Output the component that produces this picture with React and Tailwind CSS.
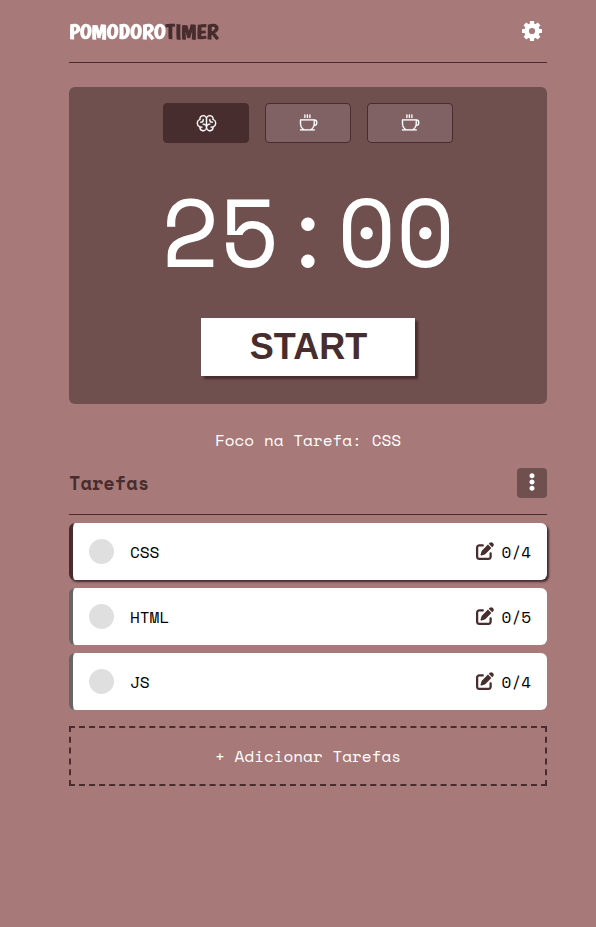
import { PiBrain, PiCoffee } from "react-icons/pi";
import { FaEllipsisV } from "react-icons/fa";
import { FaPenToSquare } from "react-icons/fa6";

const tasks = [
  { name: "CSS", count: "0/4", active: true },
  { name: "HTML", count: "0/5", active: false },
  { name: "JS", count: "0/4", active: false },
];

const teeth = [0, 45, 90, 135];

function Gear() {
  return (
    <svg viewBox="0 0 20 20" className="mr-[5px] size-5" fill="white">
      <mask id="gear-hole">
        <rect width="20" height="20" />
        <circle cx="10" cy="10" r="3.1" fill="black" />
      </mask>
      <g mask="url(#gear-hole)">
        <circle cx="10" cy="10" r="7.7" />
        {teeth.map((a) => (
          <rect key={a} x="7.9" y="0" width="4.2" height="20" rx="0.6" transform={`rotate(${a} 10 10)`} />
        ))}
      </g>
    </svg>
  );
}

function Mode({ icon: Icon, active }) {
  return (
    <button
      className={`flex h-10 w-[86px] items-center justify-center rounded border border-[#472d2d] text-white ${
        active ? "bg-[#472d2d] text-[21px]" : "bg-[#806164] text-xl"
      }`}
    >
      <Icon stroke="currentColor" strokeWidth="2" />
    </button>
  );
}

function Task({ name, count, active }) {
  return (
    <li
      className={`flex h-[57px] items-center rounded-md border-l-4 bg-white px-4 text-black ${
        active ? "border-[#472d2d] shadow-[2px_2px_2px_#472d2d]" : "border-[#666666]"
      }`}
    >
      <span className="size-[25px] rounded-full bg-[#dfdfdf]" />
      <span className="ml-4 flex-1">{name}</span>
      <FaPenToSquare className="mr-2 mb-px size-[18px] text-[#472d2d]" />
      <span>{count}</span>
    </li>
  );
}

export default function App() {
  return (
    <div className="min-h-screen bg-[#a77979] pr-[49px] pl-[69px] font-['Space_Mono','Liberation_Mono',monospace] text-base text-white">
      <header className="flex h-[63px] items-center justify-between border-b border-[#472d2d]">
        <h1 className="origin-left scale-x-[1.145] pt-px font-['Boogaloo','Lato',sans-serif] text-xl font-bold">
          POMODORO<span className="text-[#472d2d]">TIMER</span>
        </h1>
        <Gear />
      </header>

      <section className="mt-6 flex h-[317px] flex-col items-center rounded-md bg-[#704f4f] pt-4">
        <div className="flex gap-4">
          <Mode icon={PiBrain} active />
          <Mode icon={PiCoffee} />
          <Mode icon={PiCoffee} />
        </div>
        <div className="mt-4 flex h-[143px] items-center text-8xl leading-none">25:00</div>
        <button className="mt-4 h-[58px] w-[214px] bg-white pl-px font-['Liberation_Sans',Arial,sans-serif] text-4xl font-bold text-[#472d2d] shadow-[3px_3px_2px_#472d2d]">
          START
        </button>
      </section>

      <p className="mt-6 text-center leading-6">Foco na Tarefa: CSS</p>

      <div className="mt-4 flex h-[47px] items-start justify-between border-b border-[#472d2d]">
        <h2 className="text-[18.72px] leading-[30px] font-bold text-[#472d2d]">Tarefas</h2>
        <button className="flex size-[30px] items-center justify-center rounded bg-[#704f4f]">
          <FaEllipsisV className="mb-0.5 size-[18px]" />
        </button>
      </div>

      <ul className="mt-2 flex flex-col gap-2">
        {tasks.map((t) => (
          <Task key={t.name} {...t} />
        ))}
      </ul>

      <button className="mt-4 h-[60px] w-full border-2 border-dashed border-[#472d2d]">+ Adicionar Tarefas</button>
    </div>
  );
}
